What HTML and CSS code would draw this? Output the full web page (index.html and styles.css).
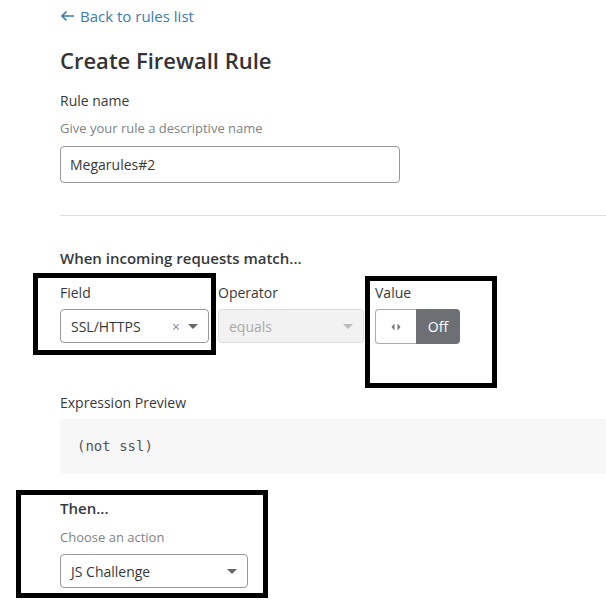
FILE: index.html
```html
<!DOCTYPE html>
<html lang="en">
<head>
    <meta charset="UTF-8">
    <meta name="viewport" content="width=device-width, initial-scale=1.0">
    <title>Create Firewall Rule</title>
    <link rel="stylesheet" href="styles.css">
</head>
<body>

<div class="page">
    <a class="back-link" href="#">
        <svg class="back-arrow" width="15" height="12" viewBox="0 0 15 12">
            <path d="M14 6 H2 M6.5 1.5 L2 6 L6.5 10.5" fill="none" stroke="#3b7bb2" stroke-width="1.6"/>
        </svg>
        Back to rules list
    </a>
    <h1 class="title">Create Firewall Rule</h1>

    <div class="field-group">
        <div class="label">Rule name</div>
        <div class="hint">Give your rule a descriptive name</div>
        <div class="text-input">Megarules#2</div>
    </div>

    <hr class="divider">

    <div class="section-title">When incoming requests match...</div>
    <div class="expr-row">
        <div class="col col-field">
            <div class="label">Field</div>
            <div class="select">
                <span class="select-value">SSL/HTTPS</span>
                <span class="clear">&times;</span>
                <span class="caret"></span>
            </div>
        </div>
        <div class="col col-operator">
            <div class="label">Operator</div>
            <div class="select disabled">
                <span class="select-value">equals</span>
                <span class="caret"></span>
            </div>
        </div>
        <div class="col col-value">
            <div class="label">Value</div>
            <div class="toggle">
                <div class="toggle-knob">
                    <svg width="10" height="8" viewBox="0 0 10 8">
                        <path d="M3.5 0.5 L0.5 4 L3.5 7.5 Z" fill="#777"/>
                        <path d="M6.5 0.5 L9.5 4 L6.5 7.5 Z" fill="#777"/>
                    </svg>
                </div>
                <div class="toggle-state">Off</div>
            </div>
        </div>
    </div>

    <div class="label preview-label">Expression Preview</div>
    <div class="preview">(not ssl)</div>

    <div class="section-title then-title">Then...</div>
    <div class="hint then-hint">Choose an action</div>
    <div class="select action-select">
        <span class="select-value">JS Challenge</span>
        <span class="caret"></span>
    </div>
</div>

<!-- highlight boxes drawn over the screenshot -->
<div class="mark mark-field"></div>
<div class="mark mark-value"></div>
<div class="mark mark-then"></div>

</body>
</html>
```

FILE: styles.css
```css
html, body {
    margin: 0;
    overflow: hidden;
}

body {
    background-color: #fff;
    color: #36393a;
    font-family: "Open Sans", "Noto Sans", sans-serif;
    font-size: 14px;
    position: relative;
    height: 600px;
}

.page {
    padding-left: 60px;
}

.back-link {
    display: flex;
    align-items: center;
    gap: 5px;
    color: #3b7bb2;
    text-decoration: none;
    font-size: 15px;
    line-height: 20px;
    padding-top: 6px;
}

.title {
    font-size: 22px;
    font-weight: 600;
    line-height: 30px;
    margin: 19px 0 0 0;
    color: #333;
}

.field-group {
    margin-top: 16px;
}

.label {
    font-size: 14px;
    line-height: 20px;
    color: #36393a;
}

.hint {
    font-size: 13px;
    line-height: 18px;
    color: #808285;
    margin-top: 8px;
}

.text-input {
    width: 340px;
    height: 37px;
    box-sizing: border-box;
    border: 1px solid #999;
    border-radius: 4px;
    padding: 0 9px;
    margin-top: 9px;
    line-height: 35px;
    font-size: 14px;
}

.divider {
    border: 0;
    border-top: 1px solid #ddd;
    margin: 32px 0 0 0;
}

.section-title {
    font-size: 15px;
    font-weight: 600;
    line-height: 20px;
    margin-top: 32px;
}

.expr-row {
    display: flex;
    gap: 9px;
    margin-top: 15px;
}

.col-field {
    width: 149px;
}

.col-operator {
    width: 146px;
}

.col-value {
    width: 100px;
    padding-left: 2px;
}

.select {
    display: flex;
    align-items: center;
    height: 34px;
    box-sizing: border-box;
    border: 1px solid #999;
    border-radius: 4px;
    padding: 0 10px;
    margin-top: 6px;
    font-size: 14px;
}

.select-value {
    flex: 1;
}

.clear {
    color: #888;
    font-size: 14px;
    margin-right: 8px;
}

.caret {
    width: 0;
    height: 0;
    border-left: 5px solid transparent;
    border-right: 5px solid transparent;
    border-top: 5px solid #666;
}

.select.disabled {
    background-color: #f2f2f2;
    border-color: #ddd;
    color: #aaa;
}

.select.disabled .caret {
    border-top-color: #bbb;
}

.toggle {
    display: flex;
    width: 85px;
    height: 35px;
    margin-top: 6px;
}

.toggle-knob {
    width: 41px;
    background-color: #fff;
    display: flex;
    align-items: center;
    justify-content: center;
    border: 1px solid #aaa;
    border-right: 0;
    border-radius: 4px 0 0 4px;
    box-sizing: border-box;
}

.toggle-state {
    flex: 1;
    background-color: #6c7075;
    color: #fff;
    font-size: 14px;
    border-radius: 0 4px 4px 0;
    display: flex;
    align-items: center;
    justify-content: center;
}

.preview-label {
    margin-top: 49px;
}

.preview {
    background-color: #f7f7f8;
    height: 55px;
    margin-top: 6px;
    border-radius: 4px 0 0 4px;
    padding-left: 17px;
    line-height: 55px;
    font-family: "DejaVu Sans Mono", "Liberation Mono", monospace;
    font-size: 14px;
    color: #555;
}

.then-title {
    margin-top: 24px;
}

.then-hint {
    margin-top: 10px;
}

.action-select {
    width: 188px;
    height: 34px;
    margin-top: 8px;
}

.mark {
    position: absolute;
    border: 5px solid #000;
    box-sizing: border-box;
}

.mark-field {
    left: 33px;
    top: 273px;
    width: 183px;
    height: 82px;
}

.mark-value {
    left: 365px;
    top: 276px;
    width: 132px;
    height: 112px;
}

.mark-then {
    left: 16px;
    top: 490px;
    width: 252px;
    height: 108px;
}
```
